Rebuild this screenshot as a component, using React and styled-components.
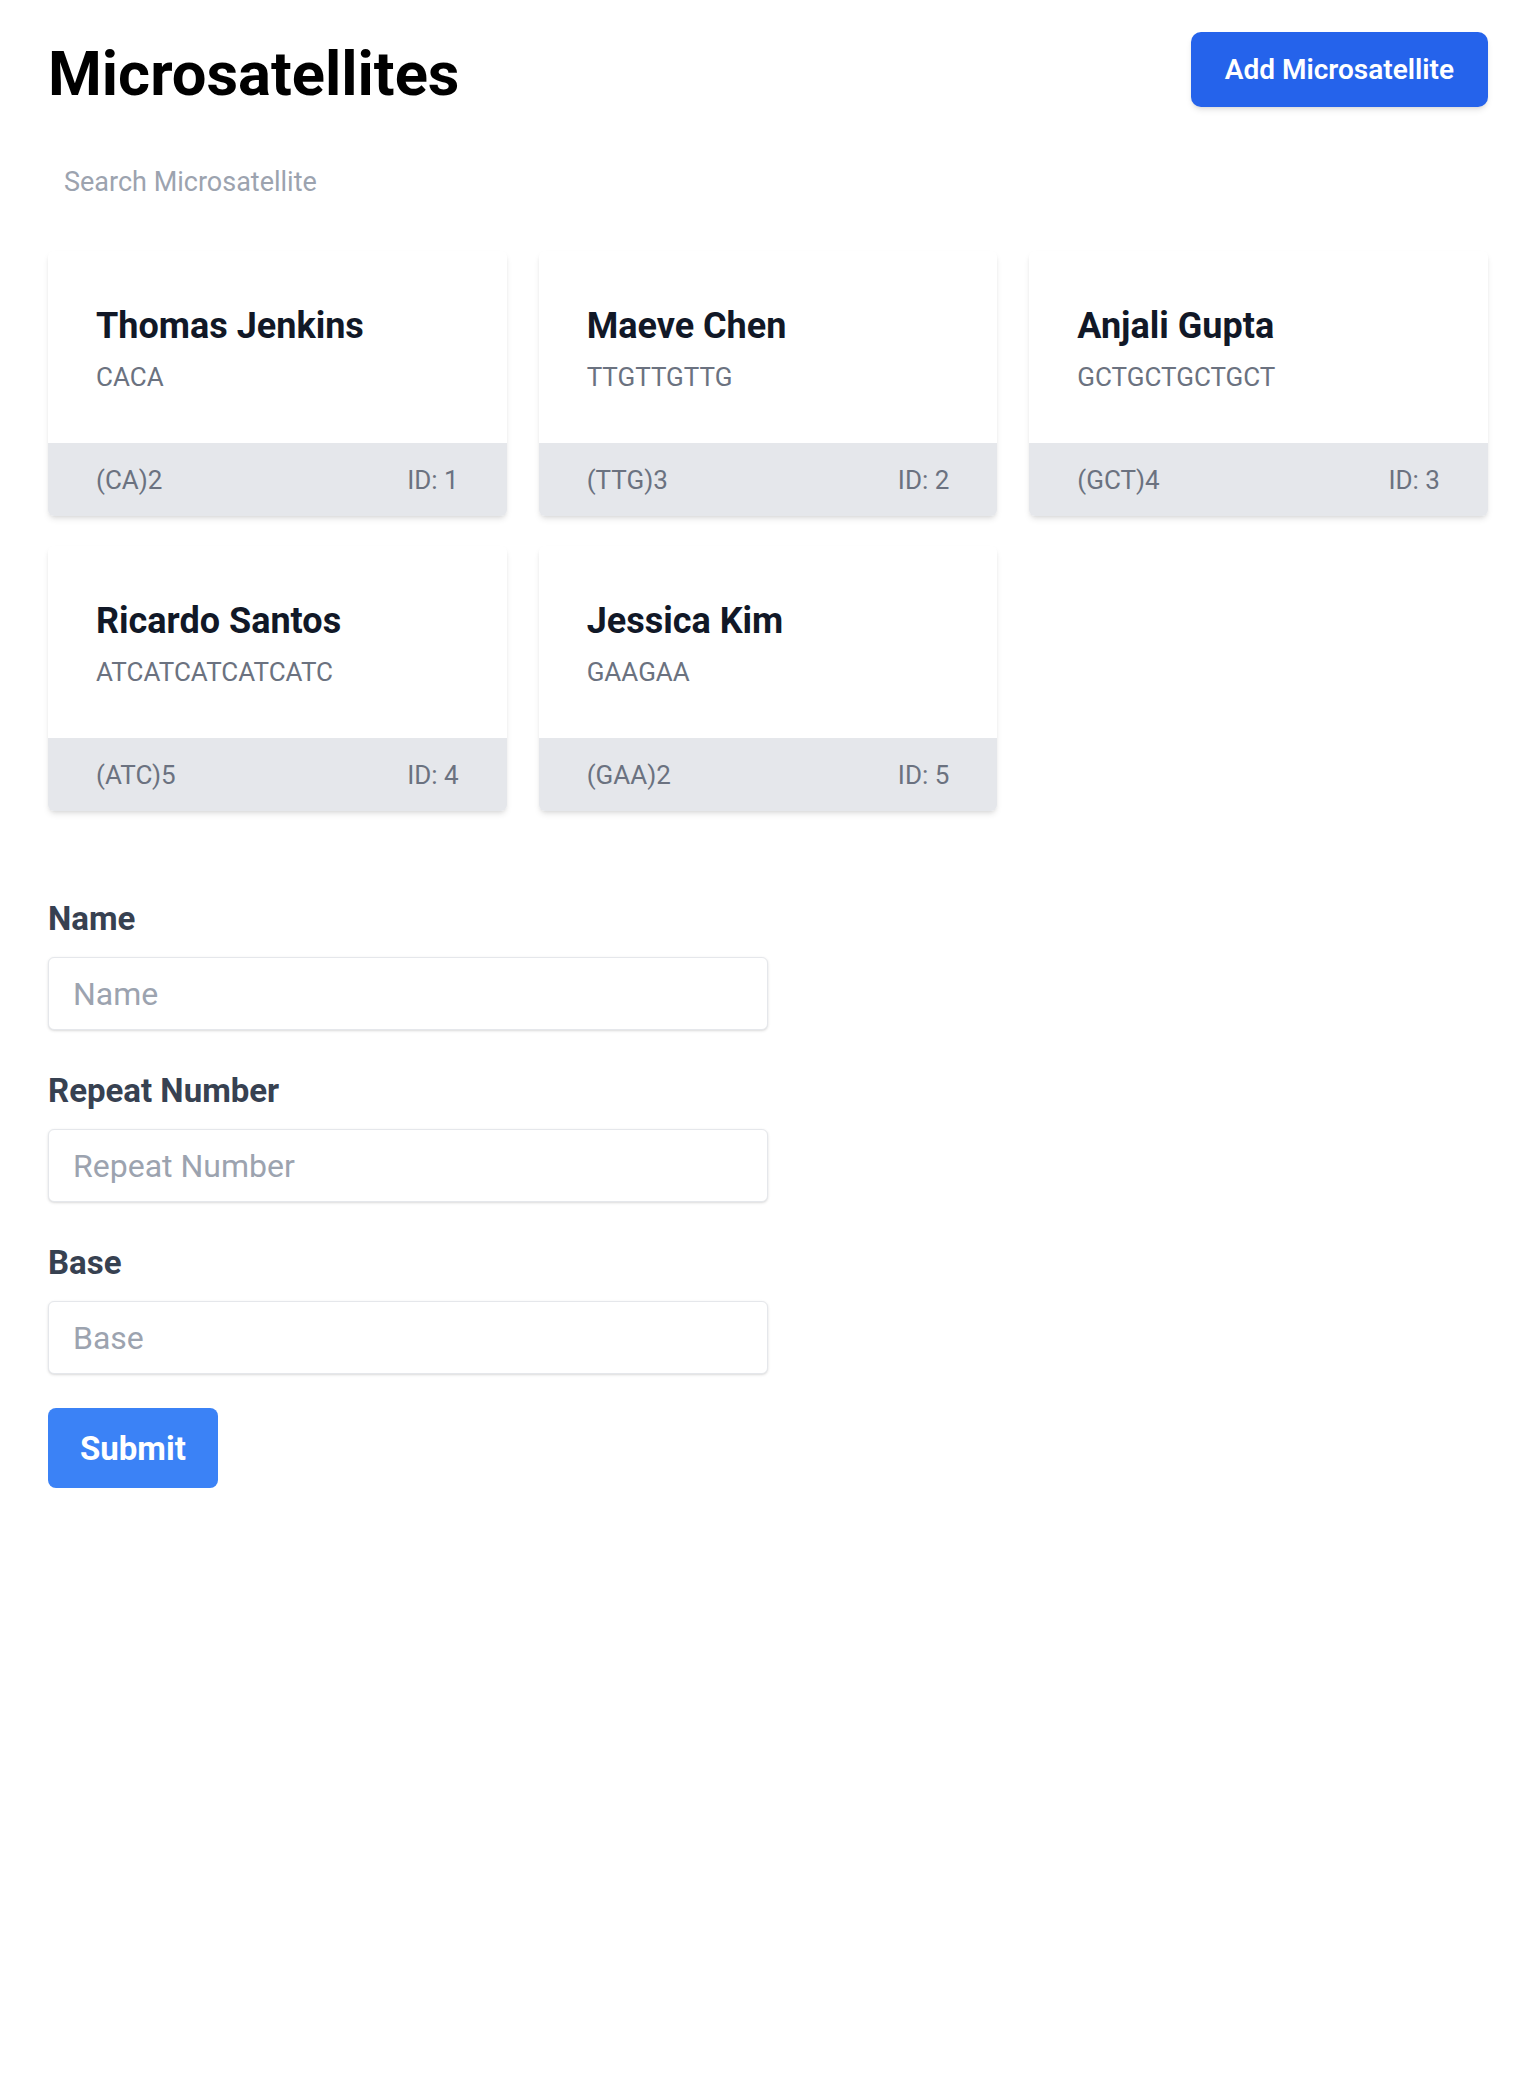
import React from "react";
import styled, { createGlobalStyle } from "styled-components";

const GlobalStyle = createGlobalStyle`
  * {
    box-sizing: border-box;
  }
  body {
    margin: 0;
    background: #fff;
    font-family: Roboto, "Noto Sans", sans-serif;
    color: #111827;
  }
`;

const Page = styled.div`
  padding: 32px 48px 48px;
`;

const Header = styled.header`
  display: flex;
  align-items: flex-start;
  justify-content: space-between;
`;

const Title = styled.h1`
  margin: 6px 0 0;
  font-size: 61.5px;
  line-height: 72px;
  font-weight: 700;
  color: #000;
`;

const AddButton = styled.button`
  height: 75px;
  padding: 0 34px;
  border: 0;
  border-radius: 10px;
  background: #2563eb;
  color: #fff;
  font-family: inherit;
  font-size: 28px;
  font-weight: 600;
  cursor: pointer;
  box-shadow: 0 4px 6px -1px rgba(0, 0, 0, 0.1), 0 2px 4px -2px rgba(0, 0, 0, 0.1);
`;

const SearchInput = styled.input`
  display: block;
  width: 100%;
  height: 54px;
  margin-top: 45px;
  padding: 0 16px;
  border: 0;
  outline: 0;
  background: transparent;
  font-family: inherit;
  font-size: 27px;
  color: #374151;

  &::placeholder {
    color: #9ca3af;
  }
`;

const CardGrid = styled.div`
  display: grid;
  grid-template-columns: repeat(3, 1fr);
  column-gap: 32px;
  row-gap: 30px;
  margin-top: 42px;
`;

const Card = styled.div`
  border-radius: 6px;
  overflow: hidden;
  background: #fff;
  box-shadow: 0 4px 6px -1px rgba(0, 0, 0, 0.1), 0 2px 4px -2px rgba(0, 0, 0, 0.1);
`;

const CardBody = styled.div`
  padding: 50px 48px 46px;
`;

const CardName = styled.h2`
  margin: 0;
  font-size: 36px;
  line-height: 50px;
  font-weight: 700;
  color: #111827;
`;

const Sequence = styled.p`
  margin: 6px 0 0;
  font-size: 26px;
  line-height: 40px;
  color: #6b7280;
`;

const CardFooter = styled.div`
  display: flex;
  align-items: center;
  justify-content: space-between;
  height: 73px;
  padding: 0 48px;
  background: #e5e7eb;
  font-size: 26px;
  line-height: 40px;
  color: #6b7280;
`;

const Form = styled.form`
  width: 50%;
  margin-top: 84px;
`;

const Field = styled.div`
  margin-bottom: 37px;
`;

const Label = styled.label`
  display: block;
  margin-bottom: 15px;
  font-size: 33px;
  line-height: 47px;
  font-weight: 700;
  color: #374151;
`;

const TextInput = styled.input`
  display: block;
  width: 100%;
  height: 73px;
  padding: 0 24px;
  border: 1px solid #e5e7eb;
  border-radius: 6px;
  outline: 0;
  background: #fff;
  font-family: inherit;
  font-size: 32px;
  color: #374151;
  box-shadow: 0 1px 3px 0 rgba(0, 0, 0, 0.12), 0 1px 2px -1px rgba(0, 0, 0, 0.1);

  &::placeholder {
    color: #9ca3af;
  }
`;

const SubmitButton = styled.button`
  height: 80px;
  margin-top: -3px;
  padding: 0 32px;
  border: 0;
  border-radius: 8px;
  background: #3b82f6;
  color: #fff;
  font-family: inherit;
  font-size: 33px;
  font-weight: 700;
  cursor: pointer;
`;

const microsatellites = [
  { id: 1, name: "Thomas Jenkins", base: "CA", repeat: 2 },
  { id: 2, name: "Maeve Chen", base: "TTG", repeat: 3 },
  { id: 3, name: "Anjali Gupta", base: "GCT", repeat: 4 },
  { id: 4, name: "Ricardo Santos", base: "ATC", repeat: 5 },
  { id: 5, name: "Jessica Kim", base: "GAA", repeat: 2 },
];

const fields = [
  { name: "name", label: "Name" },
  { name: "repeatNumber", label: "Repeat Number" },
  { name: "base", label: "Base" },
];

const App = () => {
  return (
    <>
      <GlobalStyle />
      <Page>
        <Header>
          <Title>Microsatellites</Title>
          <AddButton type="button">Add Microsatellite</AddButton>
        </Header>

        <SearchInput type="text" placeholder="Search Microsatellite" />

        <CardGrid>
          {microsatellites.map((item) => (
            <Card key={item.id}>
              <CardBody>
                <CardName>{item.name}</CardName>
                <Sequence>{item.base.repeat(item.repeat)}</Sequence>
              </CardBody>
              <CardFooter>
                <span>
                  ({item.base}){item.repeat}
                </span>
                <span>ID: {item.id}</span>
              </CardFooter>
            </Card>
          ))}
        </CardGrid>

        <Form onSubmit={(e) => e.preventDefault()}>
          {fields.map((field) => (
            <Field key={field.name}>
              <Label htmlFor={field.name}>{field.label}</Label>
              <TextInput id={field.name} name={field.name} placeholder={field.label} />
            </Field>
          ))}
          <SubmitButton type="submit">Submit</SubmitButton>
        </Form>
      </Page>
    </>
  );
};

export default App;
